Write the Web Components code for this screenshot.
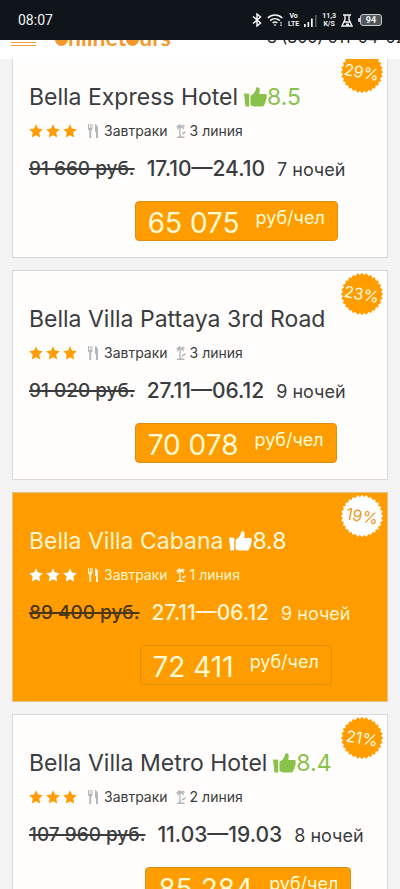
<!DOCTYPE html>
<html lang="ru">
<head>
<meta charset="utf-8">
<meta name="viewport" content="width=device-width, initial-scale=1">
<title>Onlinetours</title>
<style>
body { margin: 0; background: #f3f3f4; font-family: Inter, "Noto Sans", sans-serif; color: #3b3c40; }
</style>
</head>
<body>
<tour-app>
  <status-bar slot="status"></status-bar>
  <site-header slot="header"></site-header>
  <deal-card discount="29%" rating="8.5" line="3 линия" old="91 660 руб." dates="17.10—24.10" nights="7 ночей" price="65 075">Bella Express Hotel</deal-card>
  <deal-card discount="23%" line="3 линия" old="91 020 руб." dates="27.11—06.12" nights="9 ночей" price="70 078">Bella Villa Pattaya 3rd Road</deal-card>
  <deal-card active discount="19%" rating="8.8" line="1 линия" old="89 400 руб." dates="27.11—06.12" nights="9 ночей" price="72 411">Bella Villa Cabana</deal-card>
  <deal-card discount="21%" rating="8.4" line="2 линия" old="107 960 руб." dates="11.03—19.03" nights="8 ночей" price="85 284">Bella Villa Metro Hotel</deal-card>
</tour-app>
<script>
class Base extends HTMLElement {
  connectedCallback() {
    if (!this.shadowRoot) this.attachShadow({ mode: 'open' }).innerHTML = this.view();
  }
}

customElements.define('tour-app', class extends Base {
  view() {
    return `<style>
      :host { display: flex; flex-direction: column; height: 100vh; overflow: hidden; }
      main { flex: 1; min-height: 0; overflow: hidden; }
      .list { display: flex; flex-direction: column; gap: 12px; margin: -11px 12px 0; }
    </style>
    <slot name="status"></slot><slot name="header"></slot>
    <main><div class="list"><slot></slot></div></main>`;
  }
});

customElements.define('status-bar', class extends Base {
  view() {
    return `<style>
      :host { display: flex; flex: none; align-items: center; justify-content: space-between; height: 40px; padding: 0 18px; box-sizing: border-box; background: #10151c; color: #f2f2f2; font-family: Roboto, sans-serif; }
      time { font-size: 14px; }
      .icons { display: flex; align-items: center; gap: 5px; }
      .two { display: flex; flex-direction: column; align-items: center; font-size: 7px; line-height: 8px; font-weight: 700; }
      .battery { display: flex; align-items: center; }
      .level { display: block; box-sizing: border-box; width: 22px; height: 12px; border: 1px solid #c9cbcd; border-radius: 3px; background: #53575c; font-size: 9px; line-height: 10px; font-weight: 700; text-align: center; }
      .tip { width: 2px; height: 4px; background: #c9cbcd; border-radius: 1px 0 0 1px; }
      svg { display: block; }
    </style>
    <time>08:07</time>
    <div class="icons">
      <svg width="10" height="14" viewBox="0 0 10 14" fill="none" stroke="currentColor" stroke-width="1.500"><path d="M1 3.500l7.500 6.500-3.500 3V1l3.500 3L1 10.500"/></svg>
      <svg width="16" height="14" viewBox="0 0 16 14" fill="none" stroke="currentColor" stroke-width="1.6"><path d="M.8 5c4-4 10.400-4 14.400 0M3.200 7.700c2.800-2.600 6.800-2.600 9.600 0M5.600 10c1.500-1.300 3.300-1.300 4.800 0"/><path d="M6.500 11.500h3L8 13.200z" fill="currentColor" stroke="none"/><path d="M14 9v1.500M14 11.500v1.500" stroke-width="1.300"/></svg>
      <div class="two"><span>Vo</span><span>LTE</span></div>
      <svg width="13" height="13" viewBox="0 0 13 13" fill="currentColor"><path d="M0 10h1.700v3H0zM3.500 8h1.700v5H3.500zM7 4.500h1.700V13H7z"/><path d="M11 1h1.500v12H11z" opacity=".35"/></svg>
      <div class="two"><span>11,3</span><span>K/S</span></div>
      <svg width="12" height="13" viewBox="0 0 12 13" fill="none" stroke="currentColor" stroke-width="1.400"><path d="M2 1h8M4 1v4.500L1 12h10L8 5.500V1M3.500 8h5"/><path d="M5 9.500h3V12H5z" fill="currentColor" stroke="none"/></svg>
      <div class="battery"><i class="tip"></i><span class="level">94</span></div>
    </div>`;
  }
});

customElements.define('site-header', class extends Base {
  view() {
    return `<style>
      :host { display: flex; flex: none; align-items: flex-end; height: 19px; padding: 0 0 0 11px; box-sizing: border-box; overflow: hidden; background: #fff; }
      button { display: flex; flex-direction: column; gap: 2px; padding: 0; margin: 0 19px 13px 0; border: 0; background: none; }
      button i { display: block; width: 25px; height: 1px; background: #ee9b3a; }
      a { text-decoration: none; white-space: nowrap; line-height: 30px; }
      .logo { display: flex; align-items: center; margin-bottom: 7px; color: #f29a30; font: 700 23px/30px Lato, sans-serif; }
      .o { width: 13px; height: 13px; margin-top: 4px; border-radius: 50%; background: #f29a30; font-size: 14px; line-height: 12px; text-align: center; }
      .phone { margin: 0 0 7px auto; color: #222; font-size: 16px; flex: none; width: 133px; }
    </style>
    <button aria-label="Меню"><i></i><i></i><i></i></button>
    <a class="logo" href="#" aria-label="onlinetours"><span class="o">o</span><span>nlinet</span><span class="o">o</span><span>urs</span></a>
    <a class="phone" href="tel:88005110402">8 (800) 511-04-02</a>`;
  }
});

customElements.define('discount-badge', class extends Base {
  view() {
    const pts = [];
    for (let i = 0; i < 56; i++) {
      const r = i % 2 ? 19.200 : 21.200, a = i * Math.PI / 28;
      pts.push((21 + r * Math.cos(a)).toFixed(1) + ',' + (21 + r * Math.sin(a)).toFixed(1));
    }
    return `<style>
      :host { display: grid; width: 42px; height: 42px; place-items: center; color: var(--badge-text); }
      svg, span { grid-area: 1 / 1; }
      svg { fill: var(--badge); }
      span { font-size: 16px; line-height: 20px; transform: rotate(10deg); }
    </style>
    <svg width="42" height="42" aria-hidden="true"><polygon points="${pts.join(' ')}"/></svg><span><slot></slot></span>`;
  }
});

customElements.define('star-rating', class extends Base {
  view() {
    const star = '<svg width="14" height="14" viewBox="0 0 14 14"><path d="M7 .3l2 4.300 4.800.6-3.500 3.300.9 4.900L7 11.200l-4.200 2.200.9-4.900L.2 5.200 5 4.600z"/></svg>';
    return `<style>:host { display: flex; gap: 3px; fill: var(--star); } svg { display: block; }</style>${star.repeat(3)}`;
  }
});

customElements.define('deal-card', class extends Base {
  view() {
    const v = n => this.getAttribute(n);
    const rating = v('rating') ? `<span class="rate"><svg width="23" height="20" viewBox="0 0 23 20" aria-hidden="true"><path d="M0 6.500l5.200.3V19.500H1.500zM6.500 8.500C9 7.800 11.500 5 12 1.500 12.200-.2 16-.4 15.800 3.500L15.200 7h6.300c1.300.2 1.500 1.500 1 2.500.5 1 .3 2-.4 2.700.3 1 0 2-.7 2.600.2 1-.2 1.900-.9 2.300 0 1.500-1 2.300-2.500 2.400h-7.500c-1.500 0-2.500-1-4-1.200z"/></svg>${v('rating')}</span>` : '';
    return `<style>
      :host { --star: #ff9d09; --badge: #ff9d00; --badge-text: #fffbe2; --icon: #b5b6b8;
        display: flex; flex-direction: column; position: relative; box-sizing: border-box; padding: 33px 16px 16px; border: 1px solid #d8d9da; background: #fffefc; }
      :host([active]) { --star: #fff; --badge: #fff; --badge-text: #e79b28; --icon: #fff6d9; background: #ff9d00; color: #fff5d0; border-color: #e5c184; }
      discount-badge { position: absolute; top: 2px; right: 4px; }
      h2 { display: flex; gap: 6px; align-items: center; margin: 0; font-size: 23px; line-height: 30px; font-weight: 400; white-space: nowrap; }
      .rate { display: flex; align-items: center; color: #8ac14b; fill: #8ac14b; }
      :host([active]) .rate { color: #fffbe6; fill: #fff; }
      .facts { display: flex; align-items: center; margin-top: 9px; font-size: 14px; line-height: 20px; white-space: nowrap; }
      .facts svg { fill: var(--icon); margin: 0 4px 0 10px; }
      .facts svg.palm { margin: 0 4px 0 8px; }
      .offer { display: grid; grid-template-columns: auto 1fr; margin-top: 13px; white-space: nowrap; }
      s { font-size: 19px; line-height: 30px; font-weight: 500; color: #3b3c40; text-decoration-thickness: 2px; }
      :host([active]) s { color: #4b3718; }
      .when { display: flex; align-items: baseline; gap: 12px; padding-left: 12px; line-height: 30px; }
      .dates { font-size: 21px; font-weight: 500; }
      .nights { font-size: 18px; }
      button { grid-column: 2; justify-self: start; display: flex; gap: 16px; align-items: flex-start; box-sizing: border-box; height: 40px; margin-top: 16px; padding: 0 12px; border: 1px solid #e08f10; border-radius: 4px; background: #ff9d00; color: #fffbd6; font: inherit; }
      .sum { font-size: 28px; line-height: 42px; }
      .unit { font-size: 18px; line-height: 32px; }
    </style>
    <discount-badge>${v('discount')}</discount-badge>
    <h2><span><slot></slot></span>${rating}</h2>
    <div class="facts">
      <star-rating role="img" aria-label="3 звезды"></star-rating>
      <svg width="13" height="14" viewBox="0 0 13 14" aria-hidden="true"><path d="M1 0h1v4h.8V0h.9v4h.8V0h1v4.500c0 1.200-.6 1.800-1.300 2V14H2.300V6.500C1.500 6.300 1 5.500 1 4.500zM8 0c2 .8 3 2.500 3 4.500V14H9V8H8z"/></svg><span>Завтраки</span>
      <svg class="palm" width="10" height="14" viewBox="0 0 10 14" aria-hidden="true"><path d="M5 2C6 .3 8 .5 9 2.500L6.500 2.300C8 3 8.300 4 7.500 5.500L5 3.300 4.500 8c0 1.500.2 3 .8 4.500h3.200V14H1v-1.500h2.500C3 10 3.200 6 4 3.500L1.500 6C.8 4.500 1.400 3.500 2.500 3L.2 3.500C.5 1.500 2 .8 3.200 1.300L2.500.2C3.700-.2 4.700.6 5 2zM6 9l3.500-2v2L6 10.800z"/></svg><span>${v('line')}</span>
    </div>
    <div class="offer">
      <s>${v('old')}</s>
      <div class="when"><span class="dates">${v('dates')}</span><span class="nights">${v('nights')}</span></div>
      <button type="button"><span class="sum">${v('price')}</span><span class="unit">руб/чел</span></button>
    </div>`;
  }
});
</script>
</body>
</html>
